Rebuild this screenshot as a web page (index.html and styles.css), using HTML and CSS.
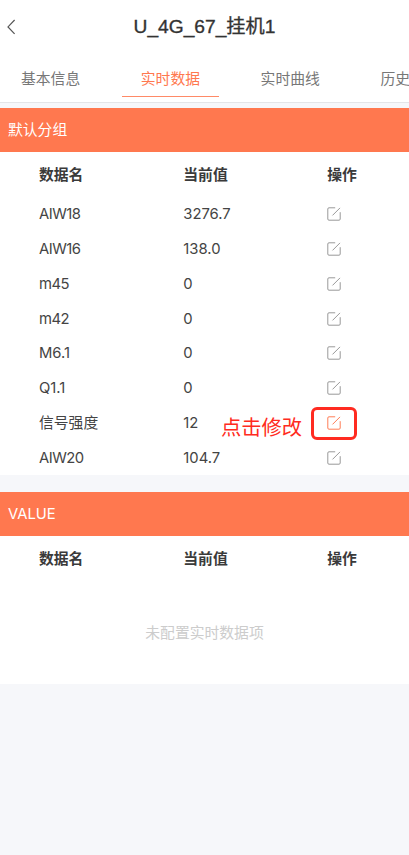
FILE: index.html
```html
<!DOCTYPE html>
<html lang="zh-CN">
<head>
<meta charset="utf-8">
<title>U_4G_67_挂机1</title>
<link rel="stylesheet" href="styles.css">
</head>
<body>
<svg class="defs" aria-hidden="true">
  <symbol id="edit" viewBox="0 0 14 14">
    <path d="M8.2 .8H2Q.8 .8 .8 2V12Q.8 13.2 2 13.2H12Q13.2 13.2 13.2 12V5.2M5.5 8.4L13 .9"/>
  </symbol>
</svg>
<header class="bar">
  <svg class="back" viewBox="0 0 9 16"><path d="M7.6 1L1 7.9L7.6 14.8"/></svg>
  <h1 class="title">U_4G_67_挂机1</h1>
</header>
<nav class="tabs">
  <a class="tab"><span>基本信息</span></a>
  <a class="tab active"><span>实时数据</span></a>
  <a class="tab"><span>实时曲线</span></a>
  <a class="tab"><span>历史数据</span></a>
</nav>
<section class="group">
  <h2 class="name">默认分组</h2>
  <div class="row head"><span>数据名</span><span>当前值</span><span>操作</span></div>
  <div class="row"><span class="key">AIW18</span><span>3276.7</span><svg class="edit"><use href="#edit"/></svg></div>
  <div class="row"><span class="key">AIW16</span><span>138.0</span><svg class="edit"><use href="#edit"/></svg></div>
  <div class="row"><span class="key">m45</span><span>0</span><svg class="edit"><use href="#edit"/></svg></div>
  <div class="row"><span class="key">m42</span><span>0</span><svg class="edit"><use href="#edit"/></svg></div>
  <div class="row"><span>M6.1</span><span>0</span><svg class="edit"><use href="#edit"/></svg></div>
  <div class="row"><span>Q1.1</span><span>0</span><svg class="edit"><use href="#edit"/></svg></div>
  <div class="row marked"><span>信号强度</span><span>12</span><svg class="edit"><use href="#edit"/></svg>
    <span class="note">点击修改</span><span class="frame"></span></div>
  <div class="row"><span class="key">AIW20</span><span>104.7</span><svg class="edit"><use href="#edit"/></svg></div>
</section>
<section class="group">
  <h2 class="name">VALUE</h2>
  <div class="row head"><span>数据名</span><span>当前值</span><span>操作</span></div>
  <p class="empty">未配置实时数据项</p>
</section>
</body>
</html>
```
FILE: styles.css
```css
* { box-sizing: border-box; }
body {
  margin: 0;
  background: #f6f7fa;
  color: #444;
  font: 14.8px/20px Inter, "Noto Sans CJK SC", sans-serif;
  overflow: hidden;
}
.defs { position: absolute; width: 0; height: 0; }
.bar {
  height: 54px;
  background: #fff;
  display: grid;
  grid-template-columns: 40px 1fr 40px;
  align-items: center;
}
.back { width: 9px; height: 16px; margin-left: 7px; fill: none; stroke: #555; stroke-width: 1.2; }
.title {
  margin: 0;
  font: 400 19.2px/26px "Liberation Sans", "Noto Sans CJK SC", sans-serif;
  -webkit-text-stroke: .35px #333;
  text-align: center;
  color: #333;
  white-space: nowrap;
}
.tabs {
  display: flex;
  height: 49px;
  margin-right: 0;
  background: #fff;
  border-bottom: 1px solid #e4e5e8;
  overflow: hidden;
}
.tab { flex: 0 0 119.8px; padding: 0 11px; color: #777; text-align: center; }
.tab:first-child { margin-left: -9.3px; }
.tab span { display: block; height: 42.5px; line-height: 51px; }
.tab.active { color: #ff784f; }
.tab.active span { border-bottom: 1px solid #ff8a67; }
.group { background: #fff; margin-top: 4.5px; }
.group + .group { margin-top: 17px; }
.name {
  margin: 0;
  padding-left: 8px;
  height: 44px;
  line-height: 44px;
  font-size: 14.8px;
  font-weight: 400;
  color: #fff;
  background: #ff784f;
}
.row {
  display: grid;
  grid-template-columns: 144.3px 144px 1fr;
  align-items: center;
  height: 34.75px;
  padding: 1px 0 0 39px;
}
.key { letter-spacing: -.5px; }
.head { height: 45px; font-weight: 600; color: #3a3a3a; }
.edit { width: 14px; height: 14px; fill: none; stroke: #999; stroke-width: 1; }
.marked { position: relative; }
.marked .edit { stroke: #ff7d56; }
.note { position: absolute; left: 221px; top: 10px; font-size: 20.3px; line-height: 26px; color: #ff2b21; }
.frame { position: absolute; left: 311px; top: 2px; width: 46px; height: 33px; border: 3px solid #ff2b21; border-radius: 6px; }
.empty { margin: 0; height: 103px; line-height: 105px; text-align: center; color: #ccc; }
```
